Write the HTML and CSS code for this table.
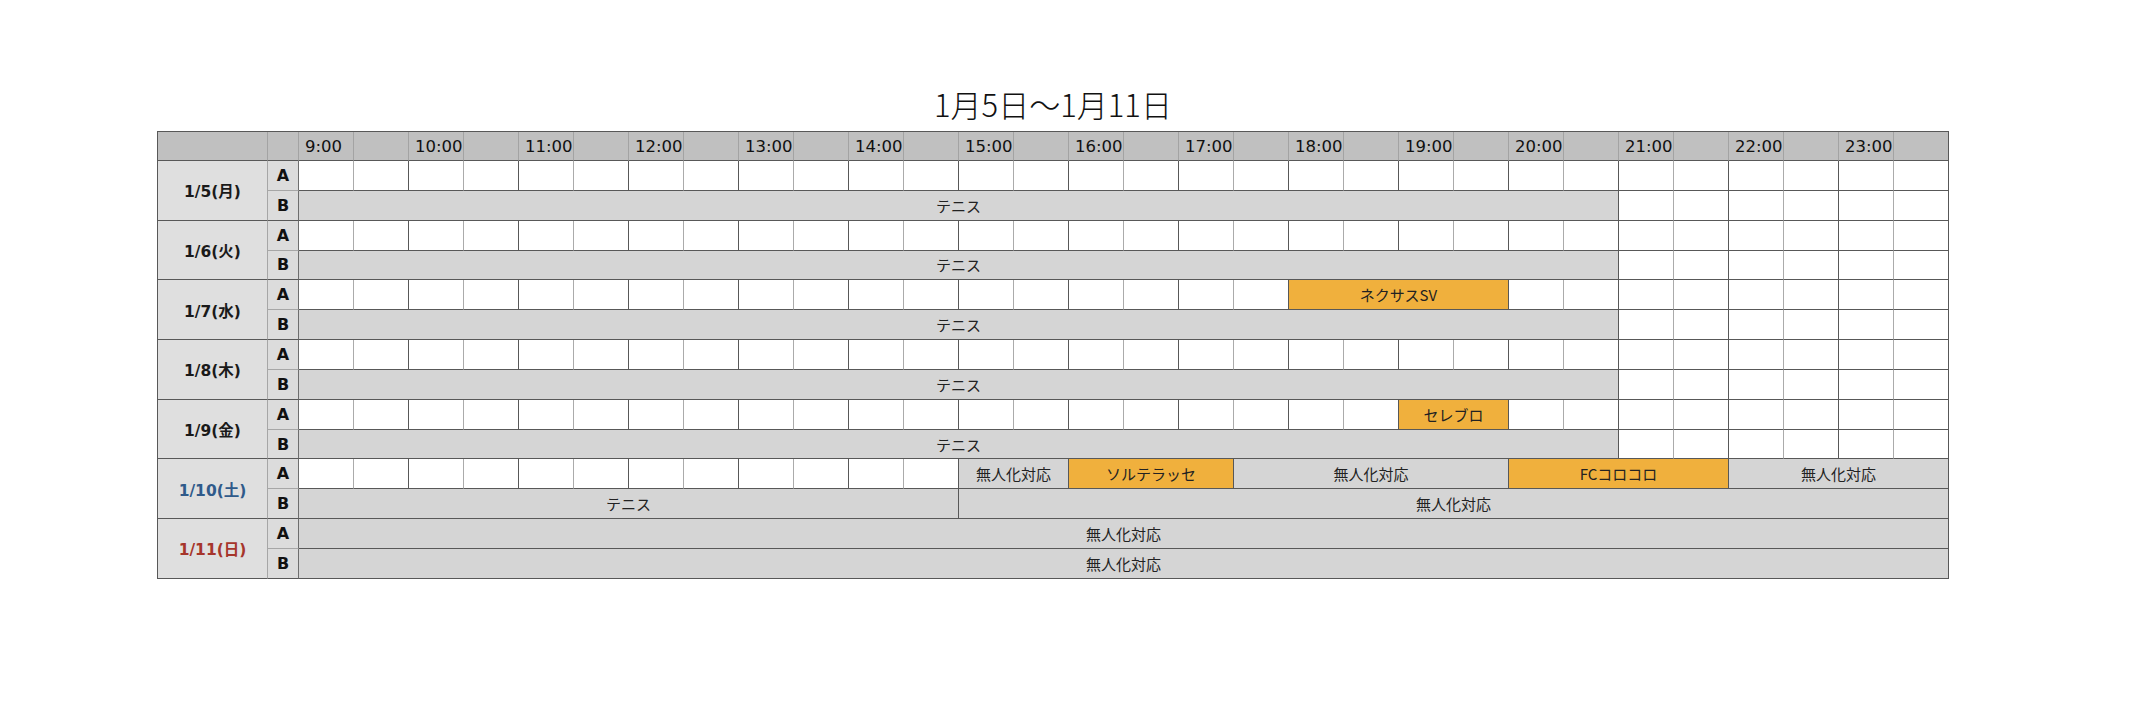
FILE: index.html
```html
<!DOCTYPE html>
<html lang="ja">
<head>
<meta charset="utf-8">
<title>1月5日〜1月11日</title>
<link rel="stylesheet" href="styles.css">
</head>
<body>
<main class="page">
  <h1 class="title">1月5日〜1月11日</h1>
  <div class="grid">
    <!-- header -->
    <div class="hd"></div><div class="hd hd-ab"></div>
    <div class="hd t">9:00</div><div class="hd"></div>
    <div class="hd t">10:00</div><div class="hd"></div>
    <div class="hd t">11:00</div><div class="hd"></div>
    <div class="hd t">12:00</div><div class="hd"></div>
    <div class="hd t">13:00</div><div class="hd"></div>
    <div class="hd t">14:00</div><div class="hd"></div>
    <div class="hd t">15:00</div><div class="hd"></div>
    <div class="hd t">16:00</div><div class="hd"></div>
    <div class="hd t">17:00</div><div class="hd"></div>
    <div class="hd t">18:00</div><div class="hd"></div>
    <div class="hd t">19:00</div><div class="hd"></div>
    <div class="hd t">20:00</div><div class="hd"></div>
    <div class="hd t">21:00</div><div class="hd"></div>
    <div class="hd t">22:00</div><div class="hd"></div>
    <div class="hd t">23:00</div><div class="hd hd-end"></div>

    <!-- 1/5 -->
    <div class="day">1/5(月)</div>
    <div class="ab a">A</div>
    <div class="w"></div><div class="w e"></div><div class="w"></div><div class="w e"></div><div class="w"></div><div class="w e"></div>
    <div class="w"></div><div class="w e"></div><div class="w"></div><div class="w e"></div><div class="w"></div><div class="w e"></div>
    <div class="w"></div><div class="w e"></div><div class="w"></div><div class="w e"></div><div class="w"></div><div class="w e"></div>
    <div class="w"></div><div class="w e"></div><div class="w"></div><div class="w e"></div><div class="w"></div><div class="w e"></div>
    <div class="w"></div><div class="w e"></div><div class="w"></div><div class="w e"></div><div class="w"></div><div class="w e"></div>
    <div class="ab">B</div>
    <div class="g s24">テニス</div>
    <div class="w"></div><div class="w e"></div><div class="w"></div><div class="w e"></div><div class="w"></div><div class="w e"></div>

    <!-- 1/6 -->
    <div class="day">1/6(火)</div>
    <div class="ab a">A</div>
    <div class="w"></div><div class="w e"></div><div class="w"></div><div class="w e"></div><div class="w"></div><div class="w e"></div>
    <div class="w"></div><div class="w e"></div><div class="w"></div><div class="w e"></div><div class="w"></div><div class="w e"></div>
    <div class="w"></div><div class="w e"></div><div class="w"></div><div class="w e"></div><div class="w"></div><div class="w e"></div>
    <div class="w"></div><div class="w e"></div><div class="w"></div><div class="w e"></div><div class="w"></div><div class="w e"></div>
    <div class="w"></div><div class="w e"></div><div class="w"></div><div class="w e"></div><div class="w"></div><div class="w e"></div>
    <div class="ab">B</div>
    <div class="g s24">テニス</div>
    <div class="w"></div><div class="w e"></div><div class="w"></div><div class="w e"></div><div class="w"></div><div class="w e"></div>

    <!-- 1/7 -->
    <div class="day">1/7(水)</div>
    <div class="ab a">A</div>
    <div class="w"></div><div class="w e"></div><div class="w"></div><div class="w e"></div><div class="w"></div><div class="w e"></div>
    <div class="w"></div><div class="w e"></div><div class="w"></div><div class="w e"></div><div class="w"></div><div class="w e"></div>
    <div class="w"></div><div class="w e"></div><div class="w"></div><div class="w e"></div><div class="w"></div><div class="w e"></div>
    <div class="o s4">ネクサスSV</div>
    <div class="w"></div><div class="w e"></div><div class="w"></div><div class="w e"></div>
    <div class="w"></div><div class="w e"></div><div class="w"></div><div class="w e"></div>
    <div class="ab">B</div>
    <div class="g s24">テニス</div>
    <div class="w"></div><div class="w e"></div><div class="w"></div><div class="w e"></div><div class="w"></div><div class="w e"></div>

    <!-- 1/8 -->
    <div class="day">1/8(木)</div>
    <div class="ab a">A</div>
    <div class="w"></div><div class="w e"></div><div class="w"></div><div class="w e"></div><div class="w"></div><div class="w e"></div>
    <div class="w"></div><div class="w e"></div><div class="w"></div><div class="w e"></div><div class="w"></div><div class="w e"></div>
    <div class="w"></div><div class="w e"></div><div class="w"></div><div class="w e"></div><div class="w"></div><div class="w e"></div>
    <div class="w"></div><div class="w e"></div><div class="w"></div><div class="w e"></div><div class="w"></div><div class="w e"></div>
    <div class="w"></div><div class="w e"></div><div class="w"></div><div class="w e"></div><div class="w"></div><div class="w e"></div>
    <div class="ab">B</div>
    <div class="g s24">テニス</div>
    <div class="w"></div><div class="w e"></div><div class="w"></div><div class="w e"></div><div class="w"></div><div class="w e"></div>

    <!-- 1/9 -->
    <div class="day">1/9(金)</div>
    <div class="ab a">A</div>
    <div class="w"></div><div class="w e"></div><div class="w"></div><div class="w e"></div><div class="w"></div><div class="w e"></div>
    <div class="w"></div><div class="w e"></div><div class="w"></div><div class="w e"></div><div class="w"></div><div class="w e"></div>
    <div class="w"></div><div class="w e"></div><div class="w"></div><div class="w e"></div><div class="w"></div><div class="w e"></div>
    <div class="w"></div><div class="w e"></div>
    <div class="o s2">セレブロ</div>
    <div class="w"></div><div class="w e"></div><div class="w"></div><div class="w e"></div>
    <div class="w"></div><div class="w e"></div><div class="w"></div><div class="w e"></div>
    <div class="ab">B</div>
    <div class="g s24">テニス</div>
    <div class="w"></div><div class="w e"></div><div class="w"></div><div class="w e"></div><div class="w"></div><div class="w e"></div>

    <!-- 1/10 -->
    <div class="day sat">1/10(土)</div>
    <div class="ab a">A</div>
    <div class="w"></div><div class="w e"></div><div class="w"></div><div class="w e"></div><div class="w"></div><div class="w e"></div>
    <div class="w"></div><div class="w e"></div><div class="w"></div><div class="w e"></div><div class="w"></div><div class="w e"></div>
    <div class="g s2">無人化対応</div>
    <div class="o s3">ソルテラッセ</div>
    <div class="g s5">無人化対応</div>
    <div class="o s4">FCコロコロ</div>
    <div class="g s4">無人化対応</div>
    <div class="ab">B</div>
    <div class="g s12">テニス</div>
    <div class="g s18">無人化対応</div>

    <!-- 1/11 -->
    <div class="day sun">1/11(日)</div>
    <div class="ab a">A</div>
    <div class="g s30">無人化対応</div>
    <div class="ab">B</div>
    <div class="g s30">無人化対応</div>
  </div>
</main>
</body>
</html>
```

FILE: styles.css
```css
html, body {
  margin: 0;
  background: #ffffff;
}

body {
  font-family: "Noto Sans CJK JP", "Noto Sans", sans-serif;
  color: #1a1a1a;
}

.page {
  padding: 86px 0 0 157px;
}

.title {
  width: 1792px;
  margin: 0 0 9px;
  font-size: 31px;
  line-height: 36px;
  font-weight: 300;
  text-align: center;
  color: #111;
}

.grid {
  display: grid;
  grid-template-columns: 110px 31px repeat(30, 55px);
  grid-template-rows: 29px repeat(14, 29.85px);
  width: fit-content;
  border-left: 1px solid #585858;
  border-top: 1px solid #585858;
}

.grid > div {
  box-sizing: border-box;
  border-right: 1px solid #585858;
  border-bottom: 1px solid #585858;
  min-width: 0;
  overflow: hidden;
  white-space: nowrap;
}

/* header */
.hd {
  background: #c0c0c0;
  border-right-color: #a3a3a3 !important;
}
.hd-end {
  border-right-color: #585858 !important;
}
.t {
  font-family: "DejaVu Sans", "Noto Sans CJK JP", sans-serif;
  font-size: 16.5px;
  line-height: 30px;
  padding-left: 6px;
  color: #111;
}

/* day label */
.day {
  grid-row: span 2;
  background: #dfdfdf;
  border-right-color: #a6a6a6 !important;
  display: flex;
  align-items: center;
  justify-content: center;
  font-family: "DejaVu Sans", "Noto Sans CJK JP", sans-serif;
  font-weight: 700;
  font-size: 15.5px;
  color: #1a1a1a;
}
.day.sat { color: #2f5a8a; }
.day.sun { color: #a6352b; }

/* A / B */
.ab {
  background: #dcdcdc;
  border-right-color: #6e6e6e !important;
  display: flex;
  align-items: center;
  justify-content: center;
  font-family: "DejaVu Sans", "Noto Sans CJK JP", sans-serif;
  font-weight: 700;
  font-size: 16px;
  color: #111;
}
.ab.a {
  border-bottom-color: #a6a6a6 !important;
}

/* empty slot */
.w {
  background: #ffffff;
  border-right-color: #ababab !important;
}
.w.e {
  border-right-color: #585858 !important;
}

/* booked slots */
.g, .o {
  display: flex;
  align-items: center;
  justify-content: center;
  font-size: 15px;
  color: #222;
}
.g { background: #d5d5d5; }
.o { background: #f0b03d; }

.s2 { grid-column: span 2; }
.s3 { grid-column: span 3; }
.s4 { grid-column: span 4; }
.s5 { grid-column: span 5; }
.s12 { grid-column: span 12; }
.s18 { grid-column: span 18; }
.s24 { grid-column: span 24; }
.s30 { grid-column: span 30; }
```
